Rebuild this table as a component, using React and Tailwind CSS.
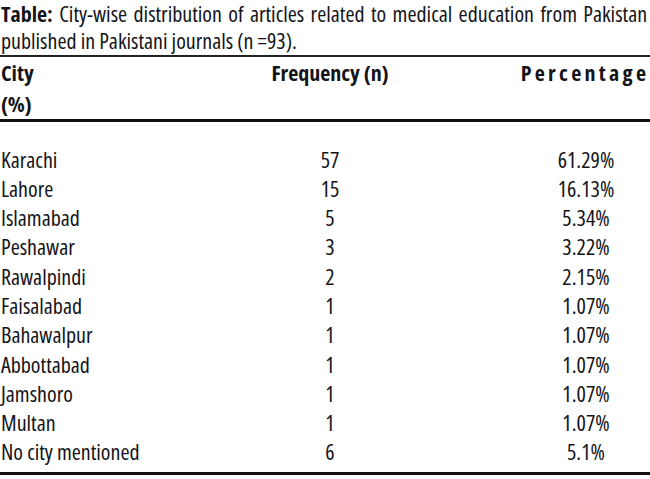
import React from 'react'

const rows = [
    ['Karachi', '57', '61.29%'],
    ['Lahore', '15', '16.13%'],
    ['Islamabad', '5', '5.34%'],
    ['Peshawar', '3', '3.22%'],
    ['Rawalpindi', '2', '2.15%'],
    ['Faisalabad', '1', '1.07%'],
    ['Bahawalpur', '1', '1.07%'],
    ['Abbottabad', '1', '1.07%'],
    ['Jamshoro', '1', '1.07%'],
    ['Multan', '1', '1.07%'],
    ['No city mentioned', '6', '5.1%'],
]

const App = () => {
    return (
        <div className="w-[650px] h-[479px] bg-white text-[#141418] font-['Open_Sans',sans-serif] font-stretch-condensed text-[22px]">
            {/* caption */}
            <div className="pl-px leading-[27px] font-medium whitespace-nowrap">
                <span className="[word-spacing:2.3px]">
                    <span className="font-bold">Table:</span> City-wise distribution of articles related to medical education from Pakistan
                </span>
                <br />
                published in Pakistani journals (n =93).
            </div>
            <div className="h-[2px] bg-[#222] mt-px" />

            {/* header */}
            <div className="grid grid-cols-[260px_140px_120px_130px] font-bold leading-[31px]">
                <div className="pl-px">
                    City
                    <br />
                    (%)
                </div>
                <div className="text-center whitespace-nowrap">Frequency (n)</div>
                <div />
                <div className="text-center tracking-[3.3px] whitespace-nowrap">Percentage</div>
            </div>
            <div className="h-[3px] bg-[#111]" />

            {/* body */}
            <div className="pt-[22.5px] leading-[29.3px] font-medium">
                {rows.map((r) => (
                    <div key={r[0]} className="grid grid-cols-[260px_140px_122px_128px]">
                        <div className="pl-px">{r[0]}</div>
                        <div className="text-center">{r[1]}</div>
                        <div />
                        <div className="text-center">{r[2]}</div>
                    </div>
                ))}
            </div>
            <div className="h-[3px] bg-[#111] mt-[5px]" />
        </div>
    )
}

export default App
